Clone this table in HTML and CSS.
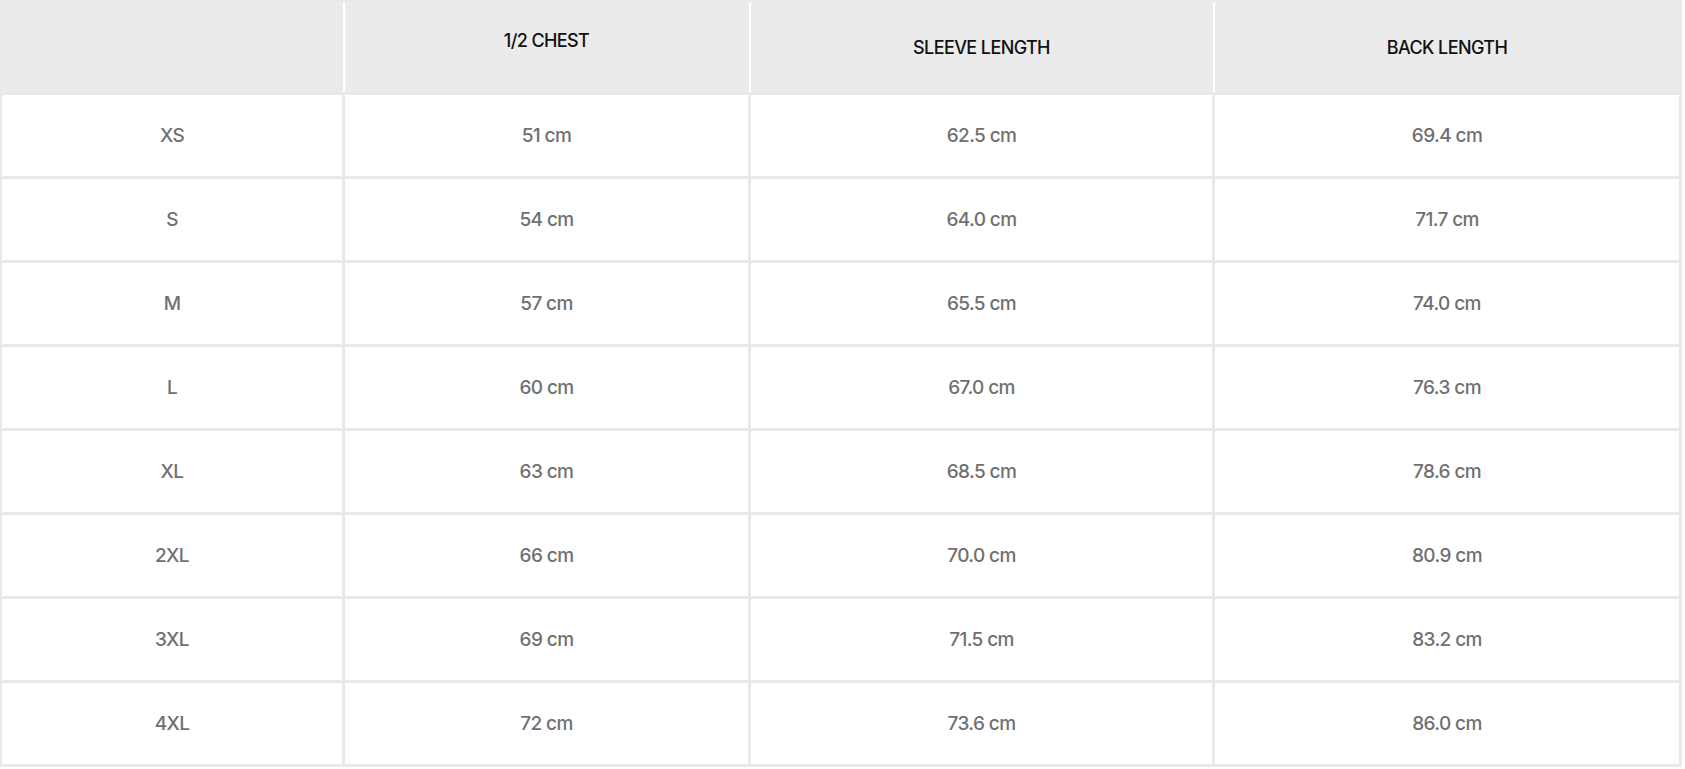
FILE: index.html
```html
<!DOCTYPE html>
<html lang="en">
<head>
<meta charset="utf-8">
<title>Size chart</title>
<link rel="stylesheet" href="styles.css">
</head>
<body>
<div class="chart">
  <div class="th"></div>
  <div class="th th-raised">1/2 CHEST</div>
  <div class="th">SLEEVE LENGTH</div>
  <div class="th">BACK LENGTH</div>

  <div class="td">XS</div><div class="td">51 cm</div><div class="td">62.5 cm</div><div class="td">69.4 cm</div>
  <div class="td">S</div><div class="td">54 cm</div><div class="td">64.0 cm</div><div class="td">71.7 cm</div>
  <div class="td">M</div><div class="td">57 cm</div><div class="td">65.5 cm</div><div class="td">74.0 cm</div>
  <div class="td">L</div><div class="td">60 cm</div><div class="td">67.0 cm</div><div class="td">76.3 cm</div>
  <div class="td">XL</div><div class="td">63 cm</div><div class="td">68.5 cm</div><div class="td">78.6 cm</div>
  <div class="td">2XL</div><div class="td">66 cm</div><div class="td">70.0 cm</div><div class="td">80.9 cm</div>
  <div class="td">3XL</div><div class="td">69 cm</div><div class="td">71.5 cm</div><div class="td">83.2 cm</div>
  <div class="td">4XL</div><div class="td">72 cm</div><div class="td">73.6 cm</div><div class="td">86.0 cm</div>
</div>
</body>
</html>
```

FILE: styles.css
```css
html, body {
  margin: 0;
  padding: 0;
  background: #ffffff;
}

body {
  font-family: Inter, "Noto Sans", "Liberation Sans", sans-serif;
}

.chart {
  width: 1682px;
  box-sizing: border-box;
  display: grid;
  grid-template-columns: 340px 403px 461px 464px;
  grid-template-rows: 90px repeat(8, 81px);
  column-gap: 3px;
  row-gap: 3px;
  padding: 2px 3px 3px 2px;
  background: #e9e9e9;
}

.th {
  background: #ebebeb;
  color: #111111;
  font-size: 18px;
  font-weight: 500;
  letter-spacing: -0.6px;
  display: flex;
  align-items: center;
  justify-content: center;
}

.th + .th {
  box-shadow: -2px 0 0 #ffffff;
}

.th-raised {
  padding-bottom: 14px;
}

.td {
  background: #ffffff;
  color: #707070;
  font-size: 19px;
  font-weight: 500;
  letter-spacing: -0.6px;
  display: flex;
  align-items: center;
  justify-content: center;
}
```
